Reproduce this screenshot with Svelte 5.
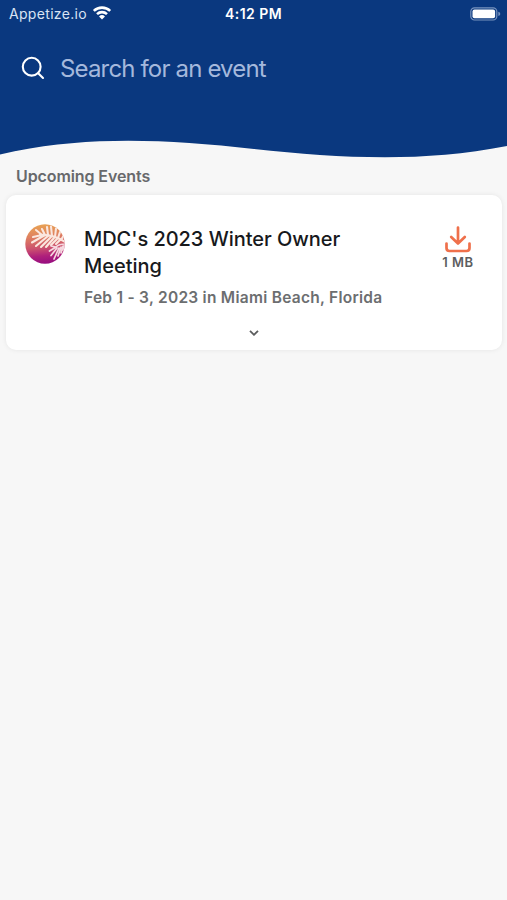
<script>
  let query = $state('');
  let expanded = $state(false);

  const events = [
    {
      title: "MDC's 2023 Winter Owner Meeting",
      details: 'Feb 1 - 3, 2023 in Miami Beach, Florida',
      size: '1 MB'
    }
  ];

  let visible = $derived(events.filter(e => e.title.toLowerCase().includes(query.toLowerCase())));
</script>

<div class="screen">
  <header>
    <div class="status-bar">
      <div class="carrier">
        <span>Appetize.io</span>
        <svg class="wifi" viewBox="0 0 20 14" aria-hidden="true">
          <path d="M1.8 4.9a12 12 0 0 1 16.4 0" />
          <path d="M5 8.1a7.4 7.4 0 0 1 10 0" />
          <path class="dot" d="M7 10.4a4.5 4.5 0 0 1 6 0L10 13.5z" />
        </svg>
      </div>
      <span class="clock">4:12 PM</span>
      <svg class="battery" viewBox="0 0 31 14" aria-hidden="true">
        <rect class="shell" x="0.8" y="0.8" width="26" height="12.2" rx="3.7" />
        <rect class="charge" x="2.5" y="2.5" width="22.6" height="8.8" rx="2" />
        <path class="cap" d="M28.3 4.8q2 .5 2 2.1t-2 2.1z" />
      </svg>
    </div>

    <label class="search">
      <svg viewBox="0 0 24 24" aria-hidden="true">
        <circle cx="10.7" cy="10.7" r="8.9" />
        <path d="M17.2 17.2l4.800 4.800" />
      </svg>
      <input type="text" placeholder="Search for an event" aria-label="Search for an event" bind:value={query} />
    </label>

    <svg class="wave" viewBox="0 0 507 30" preserveAspectRatio="none" aria-hidden="true">
      <path d="M0 0H507V16C420 33 340 28 254 19C160 8.500 80 6 0 24.500Z" />
    </svg>
  </header>

  <main>
    <h1>Upcoming Events</h1>
    {#each visible as event}
      <article class="card">
        <div class="card-body">
          <svg class="logo" viewBox="0 0 40 40" aria-hidden="true">
            <defs>
              <linearGradient id="sunset" x1="0.35" y1="0" x2="0.45" y2="1">
                <stop offset="0" stop-color="#e9a453" />
                <stop offset="0.3" stop-color="#df8260" />
                <stop offset="0.6" stop-color="#cc526e" />
                <stop offset="0.8" stop-color="#b0207b" />
                <stop offset="1" stop-color="#960d80" />
              </linearGradient>
              <clipPath id="disc"><circle cx="20" cy="20" r="19.700" /></clipPath>
            </defs>
            <g clip-path="url(#disc)">
              <rect width="40" height="40" fill="url(#sunset)" />
              <!-- large palm frond: stem first, then its leaves -->
              <g class="frond">
                <path d="M40 18Q28 10 15 11" />
                <path d="M17 11L11 6M17 11L8 13M20 11L7 18.500M23 12L11 22M26 13L16 23M29 14L21 23M32 15L26 21M35 16L31 20" />
                <path d="M20 11L17 5M23 11L22 3M27 12L26 2.500M30 13L31 4.500M33 14L35 8M36 16L39 11" />
              </g>
              <!-- small palm frond -->
              <g class="frond small">
                <path d="M40 20Q34 20 31 23L26 22M31 23L24.500 27M32 24L26 31.500M34 24L29 35M36 23L33 32M38 22L36 29M40 20L38 26" />
              </g>
            </g>
          </svg>

          <div class="info">
            <h2>{event.title}</h2>
            <p>{event.details}</p>
          </div>

          <button class="download" aria-label="Download event">
            <svg viewBox="0 0 26 27" aria-hidden="true">
              <path d="M13 1.500V17M6.200 11L13 17.500L19.800 11M1.500 17.500V22Q1.500 25 4.500 25H21.500Q24.500 25 24.500 22V17.500" />
            </svg>
            <span>{event.size}</span>
          </button>
        </div>

        <button class="expand" aria-label="Show more" aria-expanded={expanded} onclick={() => (expanded = !expanded)}>
          <svg viewBox="0 0 10 6" aria-hidden="true"><path d="M1 .8L5 4.800L9 .8" /></svg>
        </button>
      </article>
    {/each}
  </main>
</div>

<style>
  :global(body) { margin: 0; background: #f7f7f7; }
  .screen {
    min-height: 900px;
    background: #f7f7f7;
    font-family: Inter, 'Liberation Sans', sans-serif;
    color: #17191c;
  }
  header { background: linear-gradient(#0a387f 130px, transparent 130px); }
  svg { display: block; fill: none; flex-shrink: 0; }
  button { border: none; background: none; padding: 0; font-family: inherit; cursor: pointer; }

  .status-bar {
    height: 28px;
    box-sizing: border-box;
    padding: 0 6px 0 9px;
    display: grid;
    grid-template-columns: 1fr auto 1fr;
    align-items: center;
    color: #fff;
    font-size: 14px;
    line-height: 28px;
  }
  .carrier { display: flex; align-items: center; gap: 5px; color: #d9e4f4; letter-spacing: 0.32px; }
  .wifi { width: 20px; height: 14px; margin-top: -2px; stroke: #fff; stroke-width: 2.6; }
  .wifi .dot { fill: #fff; stroke: none; }
  .clock { margin-right: 3px; font-weight: 600; letter-spacing: 0.45px; }
  .battery { width: 31px; height: 14px; justify-self: end; margin-top: -1px; }
  .shell { stroke: #7893be; stroke-width: 1.2; }
  .charge { fill: #fff; }
  .cap { fill: #7893be; }

  .search {
    height: 82px;
    padding: 0 22px 20px 21px;
    display: flex;
    align-items: center;
    box-sizing: content-box;
  }
  .search svg { width: 24px; height: 24px; margin: -2px 15px 0 0; stroke: #fff; stroke-width: 2.1; stroke-linecap: round; }
  .search input {
    flex: 1;
    min-width: 0;
    padding: 0;
    border: none;
    outline: none;
    background: none;
    color: #fff;
    font: 400 24px/32px Inter, 'Liberation Sans', sans-serif;
    letter-spacing: -0.84px;
  }
  .search input::placeholder { color: #a5b8dc; opacity: 1; }
  .wave { width: 100%; height: 30px; fill: #0a387f; }

  main { padding: 6px 5px 0 6px; }
  h1 {
    margin: 0 10px 9px;
    color: #68696c;
    font-size: 16px;
    font-weight: 600;
    line-height: 20px;
    letter-spacing: -0.1px;
  }
  .card {
    height: 155px;
    box-sizing: border-box;
    display: flex;
    flex-direction: column;
    justify-content: space-between;
    border-radius: 10px;
    background: #fff;
    box-shadow: 0 0 5px rgba(0, 0, 0, 0.08);
  }
  .card-body { display: flex; align-items: flex-start; padding: 29px 26px 0 19px; }
  .logo { width: 40px; height: 40px; }
  .frond { stroke: #fbe7df; stroke-width: 2.1; stroke-linecap: round; }
  .frond.small { stroke: #f6d9e0; stroke-width: 1.7; }
  .info { flex: 1; margin: 2px 50px 0 19px; }
  h2 { margin: 0; font-size: 20px; font-weight: 500; line-height: 27px; letter-spacing: -0.04px; }
  p {
    margin: 8px 0 0;
    color: #6c6e70;
    font-size: 15.5px;
    font-weight: 600;
    line-height: 20px;
    letter-spacing: 0.27px;
    white-space: nowrap;
  }
  .download {
    width: 36px;
    margin-top: 2px;
    display: flex;
    flex-direction: column;
    align-items: center;
    gap: 1px;
    color: #5c5d60;
    font-size: 13px;
    font-weight: 600;
    line-height: 16px;
    letter-spacing: 0.5px;
    white-space: nowrap;
  }
  .download svg { width: 26px; height: 27px; stroke: #ef704b; stroke-width: 2.7; stroke-linecap: round; stroke-linejoin: round; }
  .expand { display: flex; justify-content: center; padding: 8px 0 14px; }
  .expand svg { width: 10px; height: 6px; stroke: #5c5d5e; stroke-width: 1.8; }
</style>
